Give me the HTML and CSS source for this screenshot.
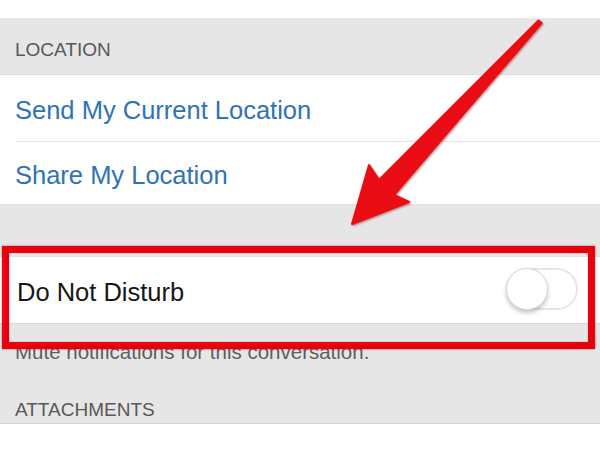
FILE: index.html
```html
<!DOCTYPE html>
<html>
<head>
<meta charset="utf-8">
<link rel="stylesheet" href="styles.css">
</head>
<body>
<div class="screen">
  <div class="top-gap"></div>
  <div class="section-header">LOCATION</div>
  <div class="group">
    <div class="row row-send link">Send My Current Location</div>
    <div class="separator"></div>
    <div class="row row-share link">Share My Location</div>
  </div>
  <div class="gap"></div>
  <div class="group">
    <div class="row row-dnd">
      <span class="label">Do Not Disturb</span>
      <span class="toggle"><span class="knob"></span></span>
    </div>
  </div>
  <div class="footer">
    <div class="footnote">Mute notifications for this conversation.</div>
    <div class="section-title">ATTACHMENTS</div>
  </div>
  <div class="bottom"></div>

  <div class="highlight"></div>
  <svg class="arrow" width="600" height="450" viewBox="0 0 600 450">
    <defs>
      <filter id="sh" x="-20%" y="-20%" width="140%" height="140%">
        <feGaussianBlur in="SourceAlpha" stdDeviation="1.2"/>
        <feOffset dx="0.5" dy="1" result="b"/>
        <feFlood flood-color="#7a0000" flood-opacity="0.5"/>
        <feComposite in2="b" operator="in"/>
        <feMerge><feMergeNode/><feMergeNode in="SourceGraphic"/></feMerge>
      </filter>
    </defs>
    <polygon filter="url(#sh)" fill="#ea0a12" stroke="#ea0a12" stroke-width="2" stroke-linejoin="round"
      points="352,224 409,202 394,195 541.5,23 538.5,20.5 379,180 369,165"/>
  </svg>
</div>
</body>
</html>
```

FILE: styles.css
```css
html, body {
  margin: 0;
  padding: 0;
  background: #ffffff;
}
body {
  font-family: "Liberation Sans", Arial, Helvetica, sans-serif;
}
.screen {
  position: relative;
  width: 600px;
  height: 450px;
  overflow: hidden;
  display: flex;
  flex-direction: column;
  background: #ffffff;
}
.top-gap {
  height: 18px;
  flex: none;
}
.section-header {
  flex: none;
  height: 57px;
  box-sizing: border-box;
  padding: 21px 0 0 15px;
  background: #e6e6e6;
  color: #58585a;
  font-size: 19px;
  line-height: 22px;
  border-bottom: 1px solid #dcdcdc;
}
.group {
  background: #ffffff;
  flex: none;
}
.row {
  display: flex;
  align-items: center;
  box-sizing: border-box;
}
.link {
  color: #2f72b8;
  font-size: 25.5px;
  line-height: 30px;
  padding-left: 15px;
}
.row-send {
  height: 66px;
  padding-top: 4px;
}
.separator {
  height: 1px;
  margin-left: 15px;
  background: #e4e4e4;
}
.row-share {
  height: 63px;
  padding-top: 4px;
  border-bottom: 1px solid #e0e0e0;
}
.gap {
  flex: none;
  height: 51px;
  background: #e6e6e6;
}
.row-dnd {
  height: 68px;
  padding: 2px 22px 0 17px;
  justify-content: space-between;
  border-top: 1px solid #e2e2e2;
  border-bottom: 1px solid #dadada;
}
.label {
  color: #161616;
  font-size: 25.5px;
  line-height: 30px;
  padding-top: 2px;
}
.toggle {
  position: relative;
  width: 72px;
  height: 42px;
  box-sizing: border-box;
  border: 2px solid #e6e6e6;
  border-radius: 21px;
  background: #ffffff;
  margin-top: -4px;
}
.knob {
  position: absolute;
  left: -2px;
  top: -2px;
  width: 42px;
  height: 42px;
  box-sizing: border-box;
  border-radius: 50%;
  background: #ffffff;
  border: 1px solid #d8d8d8;
  box-shadow: 0 3px 4px rgba(0, 0, 0, 0.22);
}
.footer {
  flex: none;
  height: 100px;
  box-sizing: border-box;
  background: #e6e6e6;
  padding: 16px 0 0 15px;
  border-bottom: 1px solid #d4d4d4;
  box-shadow: 0 2px 4px rgba(0, 0, 0, 0.08);
}
.footnote {
  color: #5e5e60;
  font-size: 20.5px;
  line-height: 24px;
}
.section-title {
  margin-top: 35px;
  color: #58585a;
  font-size: 19px;
  line-height: 22px;
}
.bottom {
  flex: 1;
  background: #ffffff;
}
.highlight {
  position: absolute;
  left: 2px;
  top: 246px;
  width: 593px;
  height: 103px;
  box-sizing: border-box;
  border: 7px solid #e8000d;
  box-shadow: 0 0 2px rgba(110, 0, 0, 0.55), inset 0 0 2px rgba(110, 0, 0, 0.35);
}
.arrow {
  position: absolute;
  left: 0;
  top: 0;
}
```
